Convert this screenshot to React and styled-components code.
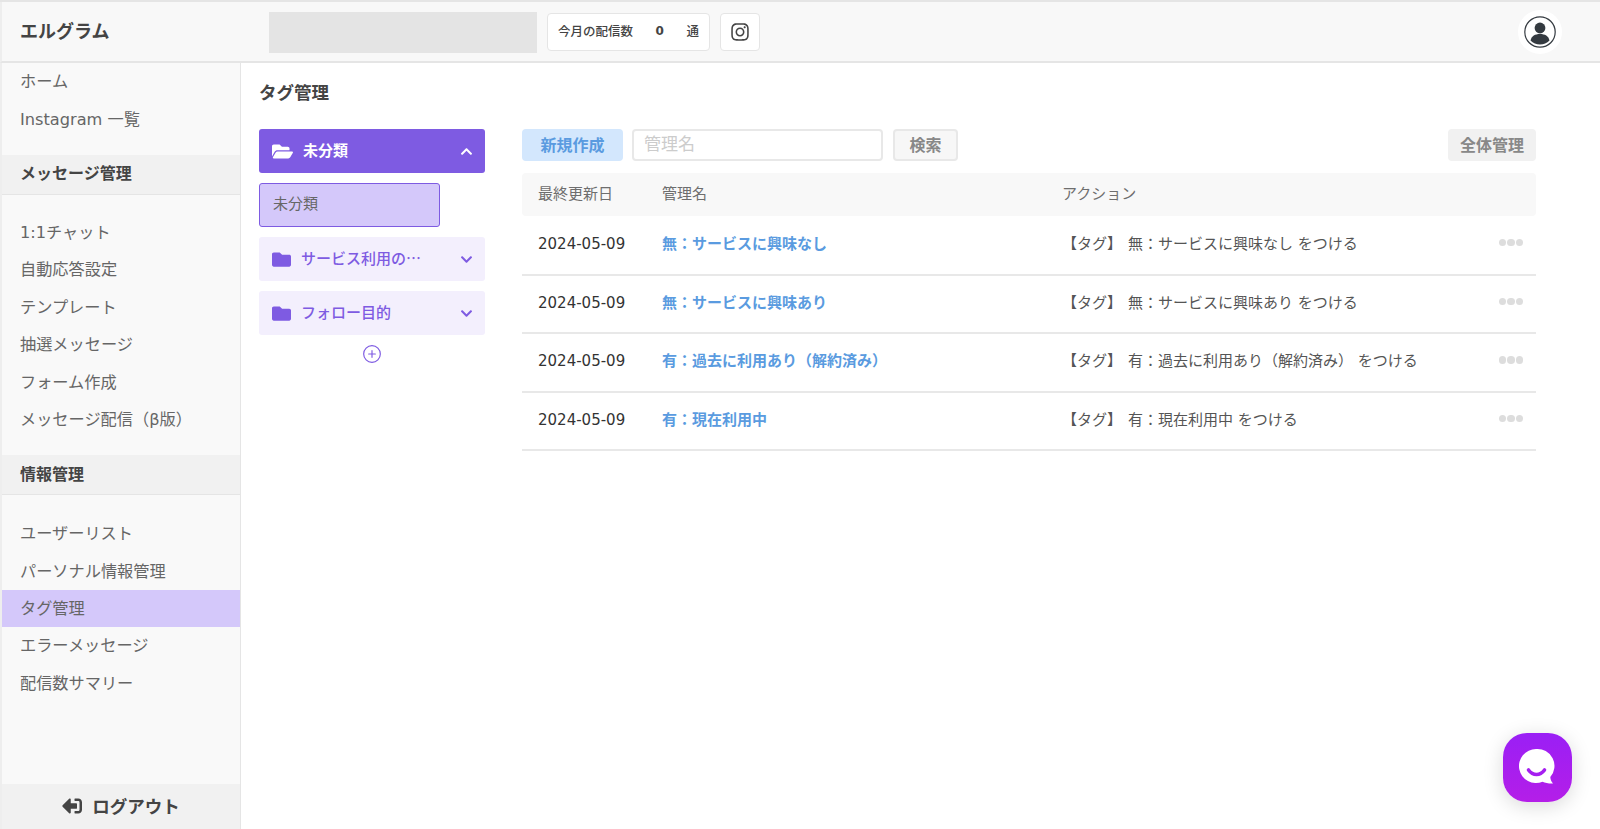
import React from "react";
import styled, { createGlobalStyle } from "styled-components";
import { FaChevronDown, FaChevronUp, FaFolder, FaFolderOpen, FaInstagram, FaSignOutAlt } from "react-icons/fa";
import { CirclePlus } from "lucide-react";

const GlobalStyle = createGlobalStyle`
    * {
        box-sizing: border-box;
    }
    html, body {
        margin: 0;
        background: #fff;
        font-family: "DejaVu Sans", "Noto Sans CJK JP", sans-serif;
        color: #666;
    }
`;

const menuTop = ["ホーム", "Instagram 一覧"];
const menuMessage = ["1:1チャット", "自動応答設定", "テンプレート", "抽選メッセージ", "フォーム作成", "メッセージ配信（β版）"];
const menuInfo = ["ユーザーリスト", "パーソナル情報管理", "タグ管理", "エラーメッセージ", "配信数サマリー"];

const rows = [
    { date: "2024-05-09", name: "無：サービスに興味なし", action: "無：サービスに興味なし をつける" },
    { date: "2024-05-09", name: "無：サービスに興味あり", action: "無：サービスに興味あり をつける" },
    { date: "2024-05-09", name: "有：過去に利用あり（解約済み）", action: "有：過去に利用あり（解約済み） をつける" },
    { date: "2024-05-09", name: "有：現在利用中", action: "有：現在利用中 をつける" },
];

export default function App() {
    return (
        <>
            <GlobalStyle />
            <Page>
                <Header>
                    <Logo>エルグラム</Logo>
                    <Placeholder />
                    <Counter>
                        <span>今月の配信数</span>
                        <CounterNum>0</CounterNum>
                        <span>通</span>
                    </Counter>
                    <IconBox>
                        <FaInstagram size={20} />
                    </IconBox>
                    <Avatar>
                        <svg width="32" height="32" viewBox="0 0 32 32">
                            <circle cx="16" cy="16" r="15.2" fill="#fff" stroke="#343a40" strokeWidth="1.2" />
                            <circle cx="16" cy="12" r="5.4" fill="#343a40" />
                            <path d="M6.5 24.5c1-4.5 4.5-6.5 9.5-6.5s8.500 2 9.500 6.500a13.500 13.500 0 0 1-19 0z" fill="#343a40" />
                        </svg>
                    </Avatar>
                </Header>
                <Body>
                    <Sidebar>
                        <Menu>
                            {menuTop.map((m) => (
                                <MenuItem key={m}>{m}</MenuItem>
                            ))}
                        </Menu>
                        <SectionTitle $gap="19px">メッセージ管理</SectionTitle>
                        <Menu>
                            {menuMessage.map((m) => (
                                <MenuItem key={m}>{m}</MenuItem>
                            ))}
                        </Menu>
                        <SectionTitle $gap="20px">情報管理</SectionTitle>
                        <Menu>
                            {menuInfo.map((m) => (
                                <MenuItem key={m} $active={m === "タグ管理"}>
                                    {m}
                                </MenuItem>
                            ))}
                        </Menu>
                        <Logout>
                            <FaSignOutAlt size={20} style={{ transform: "scaleX(-1)" }} />
                            ログアウト
                        </Logout>
                    </Sidebar>
                    <Main>
                        <Title>タグ管理</Title>
                        <Columns>
                            <FolderColumn>
                                <FolderCard $open>
                                    <FaFolderOpen size={21} />
                                    <FolderName $open>未分類</FolderName>
                                    <FaChevronUp size={13} />
                                </FolderCard>
                                <SubFolder>未分類</SubFolder>
                                <FolderCard>
                                    <FaFolder size={19} />
                                    <FolderName>サービス利用の…</FolderName>
                                    <FaChevronDown size={13} />
                                </FolderCard>
                                <FolderCard>
                                    <FaFolder size={19} />
                                    <FolderName>フォロー目的</FolderName>
                                    <FaChevronDown size={13} />
                                </FolderCard>
                                <AddFolder>
                                    <CirclePlus size={20} strokeWidth={1.4} />
                                </AddFolder>
                            </FolderColumn>
                            <TableColumn>
                                <Toolbar>
                                    <NewButton>新規作成</NewButton>
                                    <SearchInput placeholder="管理名" />
                                    <SearchButton>検索</SearchButton>
                                    <AllButton>全体管理</AllButton>
                                </Toolbar>
                                <Table>
                                    <thead>
                                        <tr>
                                            <Th $w="140px">最終更新日</Th>
                                            <Th $w="400px">管理名</Th>
                                            <Th>アクション</Th>
                                            <Th $w="70px" />
                                        </tr>
                                    </thead>
                                    <tbody>
                                        {rows.map((r) => (
                                            <tr key={r.name}>
                                                <DateCell>{r.date}</DateCell>
                                                <NameCell>{r.name}</NameCell>
                                                <ActionCell>
                                                    <TagMark>【タグ】</TagMark>
                                                    {r.action}
                                                </ActionCell>
                                                <MoreCell>
                                                    <Dots>
                                                        <i />
                                                        <i />
                                                        <i />
                                                    </Dots>
                                                </MoreCell>
                                            </tr>
                                        ))}
                                    </tbody>
                                </Table>
                            </TableColumn>
                        </Columns>
                    </Main>
                </Body>
                <ChatButton>
                    <svg width="44" height="44" viewBox="0 0 44 44">
                        <path
                            d="M20 3a17 17 0 1 0 6.500 32.700c2.800 1.200 6.500 2 10.500 1.800-1.700-1.800-2.600-4-2.700-6.400A17 17 0 0 0 20 3z"
                            fill="#fff"
                        />
                        <path d="M12.500 24c4.500 6 11.500 6 16 0" fill="none" stroke="#a51ff0" strokeWidth="3.600" strokeLinecap="round" />
                    </svg>
                </ChatButton>
            </Page>
        </>
    );
}

const Page = styled.div`
    height: 829px;
    display: flex;
    flex-direction: column;
    overflow: hidden;
    border-top: 2px solid #e5e5e5;
`;
const Header = styled.header`
    height: 61px;
    flex-shrink: 0;
    display: flex;
    align-items: center;
    padding: 0 38px 0 18px;
    background: #f8f8f8;
    border-left: 2px solid #eee;
    border-bottom: 2px solid #e5e5e5;
`;
const Logo = styled.div`
    width: 249px;
    padding-bottom: 4px;
    font-size: 18px;
    font-weight: 700;
    color: #444;
`;
const Placeholder = styled.div`
    width: 268px;
    height: 41px;
    margin: 2px 10px 0 0;
    background: #e4e4e4;
`;
const Counter = styled.div`
    width: 163px;
    height: 38px;
    display: flex;
    align-items: center;
    padding: 0 10px 2px;
    background: #fff;
    border: 1px solid #e5e5e5;
    border-radius: 4px;
    font-size: 12.500px;
    font-weight: 500;
    color: #444;
`;
const CounterNum = styled.span`
    margin: 0 auto;
    font-size: 12px;
    font-weight: 700;
`;
const IconBox = styled.div`
    width: 40px;
    height: 38px;
    margin-left: 10px;
    display: flex;
    align-items: center;
    justify-content: center;
    background: #fff;
    border: 1px solid #e5e5e5;
    border-radius: 4px;
    color: #444;
`;
const Avatar = styled.div`
    width: 44px;
    height: 44px;
    margin-left: auto;
    display: flex;
    align-items: center;
    justify-content: center;
    background: #fff;
    border-radius: 50%;
`;
const Body = styled.div`
    flex: 1;
    display: flex;
    min-height: 0;
`;
const Sidebar = styled.aside`
    width: 241px;
    flex-shrink: 0;
    display: flex;
    flex-direction: column;
    background: #f9f9f9;
    border-left: 2px solid #eee;
    border-right: 1px solid #e5e5e5;
`;
const Menu = styled.div`
    display: flex;
    flex-direction: column;
    padding-bottom: 17px;
`;
const MenuItem = styled.div`
    height: 37.4px;
    display: flex;
    align-items: center;
    padding: 0 0 3px 18px;
    font-size: 16.200px;
    color: #666;
    background: ${(p) => (p.$active ? "#d4c8fa" : "transparent")};
`;
const SectionTitle = styled.div`
    height: 40px;
    margin-bottom: ${(p) => p.$gap};
    display: flex;
    align-items: center;
    padding: 0 0 4px 18px;
    font-size: 16px;
    font-weight: 700;
    color: #444;
    background: #f1f1f1;
    border-bottom: 1px solid #e5e5e5;
`;
const Logout = styled.div`
    height: 45px;
    margin-top: auto;
    display: flex;
    align-items: center;
    justify-content: center;
    gap: 10px;
    padding-bottom: 2px;
    font-size: 17.500px;
    font-weight: 700;
    color: #444;
    background: #f1f1f1;
`;
const Main = styled.main`
    flex: 1;
    min-width: 0;
    padding: 17px 64px 0 18px;
`;
const Title = styled.h1`
    margin: 0 0 23px;
    font-size: 17.500px;
    line-height: 26px;
    font-weight: 700;
    color: #444;
`;
const Columns = styled.div`
    display: flex;
    gap: 37px;
`;
const FolderColumn = styled.div`
    width: 226px;
    flex-shrink: 0;
    display: flex;
    flex-direction: column;
    gap: 10px;
`;
const FolderCard = styled.div`
    height: 44px;
    display: flex;
    align-items: center;
    padding: 0 12px 0 13px;
    border-radius: 3px;
    background: ${(p) => (p.$open ? "#7e5be2" : "#f3effd")};
    color: ${(p) => (p.$open ? "#fff" : "#7e5be2")};
`;
const FolderName = styled.span`
    flex: 1;
    margin-left: 10px;
    padding-bottom: ${(p) => (p.$open ? "3px" : "4px")};
    font-family: "Noto Sans CJK JP", sans-serif;
    font-size: 15px;
    font-weight: ${(p) => (p.$open ? 700 : 500)};
    white-space: nowrap;
`;
const SubFolder = styled.div`
    width: 181px;
    height: 44px;
    display: flex;
    align-items: center;
    padding: 0 0 5px 13px;
    font-size: 15px;
    color: #666;
    background: #d4c8fa;
    border: 1px solid #7e5be2;
    border-radius: 3px;
`;
const AddFolder = styled.div`
    display: flex;
    justify-content: center;
    margin-top: -1px;
    color: #7e5be2;
`;
const TableColumn = styled.div`
    flex: 1;
    min-width: 0;
`;
const Toolbar = styled.div`
    height: 32px;
    display: flex;
    align-items: stretch;
    margin-bottom: 12px;
`;
const NewButton = styled.div`
    width: 101px;
    display: flex;
    align-items: center;
    justify-content: center;
    padding-bottom: 2px;
    font-size: 16px;
    font-weight: 700;
    color: #5a9be0;
    background: #d3e7fd;
    border-radius: 4px;
`;
const SearchInput = styled.input`
    width: 251px;
    margin-left: 9px;
    padding: 0 10px 3px;
    font-family: inherit;
    font-size: 17px;
    background: #fff;
    border: 2px solid #e8e8e8;
    border-radius: 4px;
    outline: none;
    &::placeholder {
        color: #ccc;
    }
`;
const SearchButton = styled.div`
    width: 65px;
    margin-left: 10px;
    display: flex;
    align-items: center;
    justify-content: center;
    padding-bottom: 2px;
    font-size: 16px;
    font-weight: 700;
    color: #888;
    background: #f7f7f7;
    border: 2px solid #e8e8e8;
    border-radius: 4px;
`;
const AllButton = styled.div`
    width: 88px;
    margin-left: auto;
    display: flex;
    align-items: center;
    justify-content: center;
    padding-bottom: 2px;
    font-size: 16px;
    font-weight: 700;
    color: #888;
    background: #f1f1f1;
    border-radius: 4px;
`;
const Table = styled.table`
    width: 100%;
    border-collapse: collapse;
    table-layout: fixed;
`;
const Th = styled.th`
    width: ${(p) => p.$w || "auto"};
    height: 43px;
    padding: 0 0 5px;
    text-align: left;
    font-size: 15px;
    font-weight: 400;
    color: #6e6e6e;
    background: #f8f8f8;
    &:first-child {
        padding-left: 16px;
        border-radius: 4px 0 0 4px;
    }
    &:last-child {
        border-radius: 0 4px 4px 0;
    }
`;
const Td = styled.td`
    height: 58.600px;
    padding: 0 0 5px;
    font-size: 15px;
    border-bottom: 2px solid #e8e8e8;
`;
const DateCell = styled(Td)`
    padding: 0 0 2px 16px;
    color: #333;
`;
const NameCell = styled(Td)`
    font-weight: 700;
    color: #5a9be0;
`;
const ActionCell = styled(Td)`
    color: #555;
`;
const TagMark = styled.span`
    margin-right: 6px;
`;
const MoreCell = styled(Td)`
    padding: 0 13px 5px 0;
`;
const Dots = styled.div`
    display: flex;
    justify-content: flex-end;
    gap: 1px;
    i {
        width: 7.500px;
        height: 7.500px;
        border-radius: 50%;
        background: #ddd;
    }
`;
const ChatButton = styled.div`
    position: fixed;
    left: 1503px;
    top: 733px;
    width: 69px;
    height: 69px;
    display: flex;
    align-items: center;
    justify-content: center;
    border-radius: 24px;
    background: linear-gradient(180deg, #9a1ff5, #b41ee8);
    box-shadow: 0 4px 20px rgba(0, 0, 0, 0.15);
`;
